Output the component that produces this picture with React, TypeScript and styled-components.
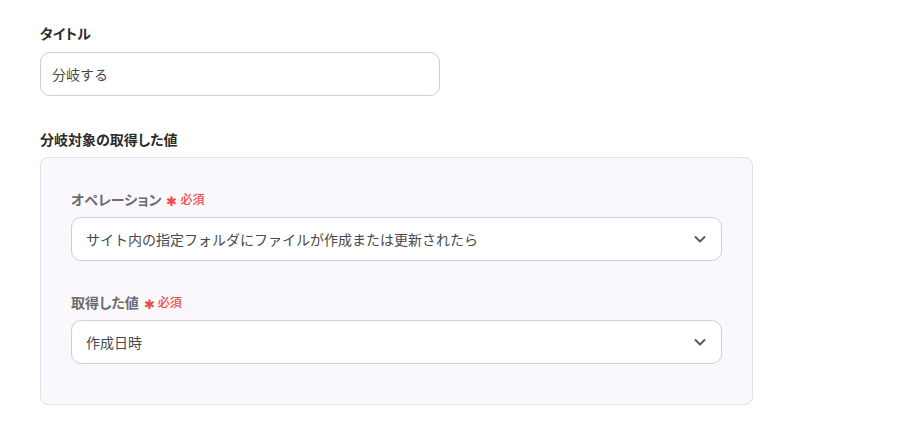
import React from "react";
import styled, { createGlobalStyle } from "styled-components";

const GlobalStyle = createGlobalStyle`
  html, body {
    margin: 0;
    padding: 0;
    background: #ffffff;
    font-family: "Noto Sans CJK JP", "Noto Sans", sans-serif;
  }
  * { box-sizing: border-box; }
`;

const Page = styled.div`
  width: 901px;
  height: 432px;
  padding: 22px 0 0 40px;
  display: flex;
  flex-direction: column;
  gap: 32px;
`;

const Section = styled.section<{ $gap: number }>`
  display: flex;
  flex-direction: column;
  gap: ${(p) => p.$gap}px;
`;

const SectionLabel = styled.div`
  font-size: 14px;
  font-weight: 600;
  color: #2b2b2b;
  line-height: 22px;
  font-feature-settings: "palt";
`;

const TextInput = styled.div`
  width: 400px;
  height: 44px;
  border: 1px solid #cfcdd8;
  border-radius: 10px;
  background: #fff;
  display: flex;
  align-items: center;
  padding: 0 11px;
  font-size: 14px;
  color: #48484c;
`;

const Panel = styled.div`
  width: 713px;
  background: #faf8fc;
  border: 1px solid #e3e0e8;
  border-radius: 8px;
  padding: 30px 30px 40px 30px;
  display: flex;
  flex-direction: column;
  gap: 30px;
`;

const Field = styled.div`
  display: flex;
  flex-direction: column;
  gap: 7px;
`;

const FieldLabel = styled.div`
  display: flex;
  align-items: center;
  gap: 5px;
  font-size: 14px;
  font-weight: 600;
  color: #6b6b70;
  line-height: 22px;
  font-feature-settings: "palt";
`;

const Required = styled.span`
  display: inline-flex;
  align-items: center;
  gap: 3px;
  font-size: 12px;
  font-weight: 500;
  color: #ef4a45;
`;

const Star = styled.span`
  font-size: 13px;
  line-height: 1;
  padding-top: 2px;
`;

const Select = styled.div`
  height: 44px;
  border: 1px solid #cfcdd8;
  border-radius: 10px;
  background: #fff;
  display: flex;
  align-items: center;
  justify-content: space-between;
  padding: 0 14px;
  font-size: 14px;
  color: #48484c;
`;

const Chevron = () => (
  <svg width="14" height="14" viewBox="0 0 14 14" fill="none">
    <path
      d="M2.5 5 L7 9.5 L11.5 5"
      stroke="#5a5a5f"
      strokeWidth="2"
      strokeLinecap="round"
      strokeLinejoin="round"
    />
  </svg>
);

export default function App() {
  return (
    <>
      <GlobalStyle />
      <Page>
        <Section $gap={8}>
          <SectionLabel>タイトル</SectionLabel>
          <TextInput>分岐する</TextInput>
        </Section>
        <Section $gap={7}>
          <SectionLabel>分岐対象の取得した値</SectionLabel>
          <Panel>
            <Field>
              <FieldLabel>
                オペレーション
                <Required>
                  <Star>✱</Star>必須
                </Required>
              </FieldLabel>
              <Select>
                サイト内の指定フォルダにファイルが作成または更新されたら
                <Chevron />
              </Select>
            </Field>
            <Field>
              <FieldLabel>
                取得した値
                <Required>
                  <Star>✱</Star>必須
                </Required>
              </FieldLabel>
              <Select>
                作成日時
                <Chevron />
              </Select>
            </Field>
          </Panel>
        </Section>
      </Page>
    </>
  );
}
